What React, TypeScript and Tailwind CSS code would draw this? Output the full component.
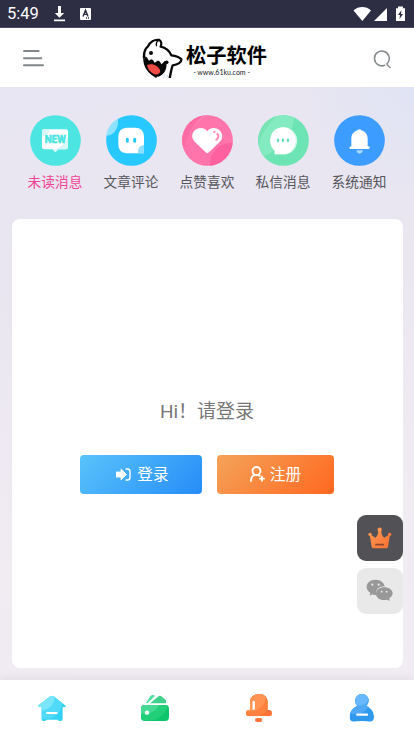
import React from 'react';

const StatusBar: React.FC = () => (
  <div className="h-7 shrink-0 bg-[#2d2d44] border-b border-[#4b4b60] flex items-center text-white px-[7px]">
    <span className="font-['Roboto',sans-serif] text-[16.5px] leading-none w-[47px] mt-[2px]">5:49</span>
    <svg width="11" height="16" viewBox="0 0 11 16" fill="#fff" className="mr-[15px]">
      <path d="M4 0h3v7h3.2L5.5 11.7.8 7H4zM0 13.6h11v1.6H0z" />
    </svg>
    <svg width="11" height="12" viewBox="0 0 11 12">
      <rect width="11" height="12" rx="1" fill="#fff" />
      <path d="M3 8.4 5.5 2.2 8 8.4M4 6.4h3M6 10h1M8 10h1" fill="none" stroke="#2d2d44" strokeWidth="1.4" />
    </svg>
    <svg width="54" height="16" viewBox="0 0 54 16" fill="#fff" className="ml-auto">
      <path d="M.5 4.5C5.3-.1 13.3-.1 18 4.5L9.3 15z" />
      <path d="M34 2v13H21z" />
      <path d="M43 2.3h2V.6h5v1.7h2V15h-9z" />
      <path d="M48.5 4 45 9h2l-.5 4L50 8h-2z" fill="#2d2d44" />
    </svg>
  </div>
);

const Mascot: React.FC = () => (
  <svg width="42" height="40" viewBox="36 30 126 120" className="shrink-0">
    <path
      d="M43 88C43 72 49 59 60 54C63 42 73 34 87 36C94 39 96 48 93 56C107 59 118 68 124 82C134 84 147 86 154 94C155 102 144 112 129 114C125 125 127 136 128 154H77C58 143 43 127 43 88Z"
      fill="#fff"
    />
    <path
      d="M42 90C41 74 45 62 54 55C60 43 73 33 88 36C94 39 95 48 92 56C106 59 118 68 124 82C134 83 147 86 154 94C155 102 144 110 128 112C124 122 122 136 119 151"
      fill="none"
      stroke="#080808"
      strokeWidth="7"
      strokeLinejoin="round"
    />
    <path d="M84 38C78 43 78 49 80 55" fill="none" stroke="#080808" strokeWidth="4" />
    <path d="M46 85C57 95 83 101 108 99C113 118 106 139 86 146C64 147 38 122 46 85Z" fill="#080808" />
    <path d="M42 88C41 112 52 133 80 148" fill="none" stroke="#080808" strokeWidth="5" />
    <path d="M51 111C66 105 86 112 91 129C89 138 81 142 71 138C60 132 53 123 51 111Z" fill="#ef4b45" />
    <path d="M50 87 57 98 65 92ZM67 93 74 104 83 98ZM87 98 95 109 104 99Z" fill="#fff" />
    <circle cx="63" cy="75" r="6" fill="#080808" />
    <circle cx="110" cy="103" r="5.5" fill="#080808" />
    <path d="M104 137l-3 12M112 140v8" stroke="#dceaf0" strokeWidth="5" />
  </svg>
);

const Header: React.FC = () => (
  <header className="h-[59px] shrink-0 bg-white flex items-start pl-[22.5px] pr-[22px]">
    <svg width="21" height="18" viewBox="0 0 21 18" stroke="#80868a" strokeWidth="2" strokeLinecap="round" className="mt-[21px] shrink-0">
      <path d="M1 1.9h14.6M1 9.2h17.3M1 16.2h19" />
    </svg>
    <div className="flex items-start mt-[10px] ml-[98.5px]">
      <Mascot />
      <div className="flex flex-col items-center ml-[2px] mt-[4px]">
        <span className="font-['Noto_Sans_CJK_SC',sans-serif] font-bold text-[20.3px] leading-[25px] text-black">松子软件</span>
        <span className="font-['Lato',sans-serif] text-[7px] leading-[9px] text-[#222] whitespace-pre mt-px -ml-[10px]">- www.61ku.com -</span>
      </div>
    </div>
    <svg width="19" height="19" viewBox="0 0 19 19" fill="none" stroke="#85898c" strokeWidth="1.5" strokeLinecap="round" className="mt-[22px] ml-auto shrink-0">
      <path d="M11.6 15.3A7.4 7.4 0 1 1 14.6 13.1Q12.6 14.1 17.1 17.5" />
    </svg>
  </header>
);

const NewIcon: React.FC = () => (
  <svg width="51" height="51" viewBox="45 29 153 153">
    <circle cx="121.5" cy="105.5" r="76" fill="#4ce5e1" />
    <path d="M87 72H153Q159 72 159 78V126Q159 132 153 132H129L121 141 113 132H87Q81 132 81 126V78Q81 72 87 72Z" fill="#fff" />
    <path d="M81 94V78Q81 72 87 72H106Q100 89 81 94ZM159 94V126Q159 132 153 132H129L121 141 115 134Q148 124 159 94Z" fill="#d7f8f7" />
    <text x="121" y="113" textAnchor="middle" textLength="63" lengthAdjust="spacingAndGlyphs" fontFamily="Roboto, sans-serif" fontWeight="bold" fontSize="30" fill="#4ce5e1" stroke="#4ce5e1" strokeWidth="1.8">NEW</text>
  </svg>
);

const CommentIcon: React.FC = () => (
  <svg width="51" height="51" viewBox="273 29 153 153">
    <circle cx="349.5" cy="105.5" r="76" fill="#27c7ff" />
    <path d="M309 41C311 67 300 90 274 91C277 68 290 50 309 41Z" fill="#8ce2ff" />
    <path d="M335 67H362Q387 69 387 94V144H335Q310 142 310 119V93Q311 68 335 67Z" fill="#fff" />
    <path d="M387 118V144H369Q366 123 387 118Z" fill="#8bdfff" />
    <path d="M337 102v6M359 102v6" stroke="#27c7ff" strokeWidth="9" strokeLinecap="round" />
  </svg>
);

const HeartIcon: React.FC = () => (
  <svg width="51" height="51" viewBox="50 29 153 153">
    <defs>
      <clipPath id="heartDisc"><circle cx="126.5" cy="105.5" r="76" /></clipPath>
    </defs>
    <g clipPath="url(#heartDisc)">
      <path fill="#ff74ab" d="M50 29h153v153H50z" />
      <path d="M47 146C60 105 77 56 132 28H50Z" fill="#ff80b0" />
      <path d="M47 158C61 130 60 72 118 28H45Z" fill="#ff6ca5" />
      <circle cx="199" cy="177" r="65" fill="#ff61a0" />
    </g>
    <path d="M126 78C117 65 98 65 87 76C77 87 79 101 91 112L121 141Q126 146 131 141L162 111C173 101 174 87 164 76C153 65 135 65 126 78Z" fill="#fff" />
    <path d="M156 86Q164 95 153 103" fill="none" stroke="#ff86b5" strokeWidth="6" strokeLinecap="round" />
    <circle cx="147" cy="80" r="3.5" fill="#ff86b5" />
  </svg>
);

const ChatIcon: React.FC = () => (
  <svg width="51" height="51" viewBox="278 29 153 153">
    <defs>
      <clipPath id="chatDisc"><circle cx="354.5" cy="105.5" r="76" /></clipPath>
    </defs>
    <g clipPath="url(#chatDisc)">
      <path fill="#6ce4b3" d="M278 29h153v153H278z" />
      <path d="M279 157C325 147 383 104 388 28H278Z" fill="#83ebbf" />
      <path d="M278 133C286 85 310 52 343 27H275Z" fill="#78e4b5" />
    </g>
    <path d="M355 66A40 40 0 1 1 355 147H328V136A40 40 0 0 1 355 66Z" fill="#d9f8ec" />
    <path d="M352 66A38 40 0 0 1 352 147H328V136Q314 123 315 105Q317 69 352 66Z" fill="#fff" />
    <path d="M338 103v4M353 103v4M368 103v4" stroke="#65dfb0" strokeWidth="7" strokeLinecap="round" />
  </svg>
);

const NoticeIcon: React.FC = () => (
  <svg width="51" height="51" viewBox="55 29 153 153">
    <circle cx="131.5" cy="105.5" r="76" fill="#3d9cff" />
    <path d="M126 75Q131 68 137 75C150 79 156 88 156 101V123H159Q162 124 162 127 162 131 158 131H105Q101 131 101 127 101 124 107 123V101C107 88 113 79 126 75Z" fill="#fff" />
    <path d="M122 135H142Q139 145 132 145 124 145 122 135Z" fill="#acd6ff" />
  </svg>
);

const tabs = [
  { label: '未读消息', icon: <NewIcon />, active: true },
  { label: '文章评论', icon: <CommentIcon /> },
  { label: '点赞喜欢', icon: <HeartIcon /> },
  { label: '私信消息', icon: <ChatIcon /> },
  { label: '系统通知', icon: <NoticeIcon /> },
];

const FloatingActions: React.FC = () => (
  <div className="absolute right-[11.5px] top-[515px] flex flex-col gap-[7px]">
    <button className="w-[46px] h-[46px] rounded-[9px] bg-[#515156] flex items-center justify-center">
      <svg width="24" height="22" viewBox="71 65 72 66">
        <defs>
          <linearGradient id="crown" x1="0" y1="0" x2="1" y2="1">
            <stop offset="0" stopColor="#ff9a54" />
            <stop offset="1" stopColor="#ff6f32" />
          </linearGradient>
        </defs>
        <path d="M76 86 93 97Q100 93 103 74H110Q112 93 120 97L137 86 131 125Q130 129 126 129H87Q83 129 82 125Z" fill="url(#crown)" />
        <circle cx="106" cy="73" r="6.5" fill="#ff9552" />
        <circle cx="77" cy="87" r="5" fill="#ff9552" />
        <circle cx="136" cy="87" r="5" fill="#ff793c" />
        <path d="M95 118h22" stroke="#8b4934" strokeWidth="5" strokeLinecap="round" />
      </svg>
    </button>
    <button className="w-[46px] h-[46px] rounded-[9px] bg-[#e9e9e9] flex items-center justify-center">
      <svg width="27" height="23" viewBox="67 222 81 69" fill="#989898" className="-mt-[2px]">
        <path d="M96 224C112 224 122 234 123 245C107 243 95 254 98 269Q92 271 86 268L78 273 80 264C60 251 68 224 96 224Z" />
        <path d="M121 247C136 247 147 255 147 266Q146 274 137 280L138 288 130 284C110 288 97 278 97 266C98 255 108 247 121 247Z" />
        <g fill="#e9e9e9">
          <circle cx="86" cy="239" r="3.3" />
          <circle cx="105" cy="239" r="3.3" />
          <circle cx="114" cy="260" r="2.8" />
          <circle cx="129" cy="260" r="2.8" />
        </g>
      </svg>
    </button>
  </div>
);

const BottomNav: React.FC = () => (
  <nav className="h-14 shrink-0 bg-white grid grid-cols-4 justify-items-center pt-[14px] shadow-[0_0_10px_rgba(90,80,100,0.14)] relative">
    <svg width="28" height="28" viewBox="113 132 84 84">
      <defs>
        <clipPath id="house"><path d="M150 139Q155 135 160 139L196 167Q198 171 192 171H187V208Q187 213 181 213H176L172 209H139L135 213H129Q124 213 124 208V171H118Q111 171 115 166Z" /></clipPath>
      </defs>
      <g clipPath="url(#house)">
        <path fill="#32d2f5" d="M110 130h90v90h-90z" />
        <circle cx="133" cy="154" r="54" fill="#50daf7" />
        <circle cx="124" cy="143" r="38" fill="#7be5fa" />
      </g>
      <path d="M140 189h29" stroke="#fff" strokeWidth="6" strokeLinecap="round" />
    </svg>
    <svg width="28" height="28" viewBox="423 132 84 84">
      <defs>
        <clipPath id="wallet"><path d="M434 165H496Q507 165 507 176V202Q507 213 496 213H434Q423 213 423 202V176Q423 165 434 165Z" /></clipPath>
      </defs>
      <path d="M438 159 451 139Q457 132 465 137L443 159Z" fill="#4bdf9e" />
      <path d="M450 160 474 140Q480 134 486 140L498 151V160Z" fill="#3fd18b" />
      <g clipPath="url(#wallet)">
        <path fill="#0fc66d" d="M420 160h90v60h-90z" />
        <circle cx="446" cy="154" r="58" fill="#20cf78" />
        <circle cx="434" cy="144" r="48" fill="#45d994" />
      </g>
      <circle cx="441" cy="188" r="6.5" fill="#fff" />
    </svg>
    <svg width="28" height="28" viewBox="114 132 84 84">
      <defs>
        <clipPath id="bell"><path d="M129 180V156C129 124 182 124 182 156V180H186Q195 180 195 189 195 199 186 199H126Q117 199 117 190 117 181 126 180Z" /></clipPath>
      </defs>
      <g clipPath="url(#bell)">
        <path fill="#ff7336" d="M114 130h84v75h-84z" />
        <circle cx="137" cy="150" r="53" fill="#ff8140" />
        <circle cx="130" cy="137" r="47" fill="#ff9452" />
      </g>
      <path d="M140 156v20" stroke="#fff" strokeWidth="7" strokeLinecap="round" />
      <rect x="144" y="204" width="22" height="12" rx="6" fill="#ff7639" />
    </svg>
    <svg width="28" height="28" viewBox="424 132 84 84">
      <defs>
        <clipPath id="person"><path d="M452 168C438 152 449 132 466 132 483 132 494 152 479 168 494 174 502 187 502 202Q501 215 490 215 466 211 441 215 429 215 429 202C429 186 438 173 452 168Z" /></clipPath>
      </defs>
      <g clipPath="url(#person)">
        <path fill="#2e99ed" d="M424 130h84v87h-84z" />
        <circle cx="447" cy="150" r="43" fill="#50a8f8" />
        <circle cx="459" cy="140" r="27" fill="#69b8ff" />
      </g>
      <path d="M452 194h29" stroke="#fff" strokeWidth="7" strokeLinecap="round" />
    </svg>
  </nav>
);

const App: React.FC = () => {
  return (
    <div className="relative w-full h-[736px] flex flex-col overflow-hidden font-['Noto_Sans_CJK_SC',sans-serif] bg-[radial-gradient(circle_at_100%_12%,#e0e3f4_0,transparent_110px),linear-gradient(170deg,#e8e6f3_0%,#e9e6f1_35%,#f1ebf2_70%,#f0edf3_100%)]">
      <StatusBar />
      <Header />

      {/* Message categories */}
      <div className="grid grid-cols-5 px-[17px] pt-[27.5px] h-[132px] shrink-0">
        {tabs.map((tab) => (
          <div key={tab.label} className="flex flex-col items-center">
            {tab.icon}
            <span className={`mt-[5px] text-[13.7px] leading-5 whitespace-nowrap ${tab.active ? 'text-[#f04494]' : 'text-[#55555b]'}`}>
              {tab.label}
            </span>
          </div>
        ))}
      </div>

      {/* Login prompt */}
      <main className="mx-[11.5px] mb-3 flex-1 rounded-lg bg-white flex flex-col items-center pt-[179px]">
        <p className="text-[19px] leading-7 text-[#777] font-['Roboto','Noto_Sans_CJK_SC',sans-serif]">Hi！请登录</p>
        <div className="flex gap-[15px] mt-[29px]">
          <button className="w-[122px] h-[39px] rounded-[4px] bg-[linear-gradient(135deg,#59c3fb,#268df7)] text-white text-[15.7px] flex items-center justify-center gap-[6px] pl-[3px]">
            <svg width="15" height="13" viewBox="0 0 15 13" fill="none">
              <path d="M0 4h5V.9L10.5 6.5 5 12V9H0z" fill="#fff" stroke="#fff" strokeWidth=".8" strokeLinejoin="round" />
              <path d="M9.5 1h2Q14 1 14 3.5v6Q14 12 11.5 12h-2" stroke="#fff" strokeWidth="1.4" />
            </svg>
            <span className="-mt-[2px]">登录</span>
          </button>
          <button className="w-[117px] h-[39px] rounded-[4px] bg-[linear-gradient(135deg,#f4a359,#ff6820)] text-white text-[15.7px] flex items-center justify-center gap-[5px]">
            <svg width="15" height="16" viewBox="0 0 15 16" fill="none" stroke="#fff" strokeWidth="1.8" strokeLinecap="round" className="-mt-[1px]">
              <circle cx="6.5" cy="5" r="4" />
              <path d="M.9 15C1 11.7 2.4 9.6 4.6 8.9M8.3 8.9l1.4 1M12 10.7v4M10 12.7h4" />
            </svg>
            <span className="-mt-[2px]">注册</span>
          </button>
        </div>
      </main>

      <BottomNav />
      <FloatingActions />
    </div>
  );
};

export default App;
